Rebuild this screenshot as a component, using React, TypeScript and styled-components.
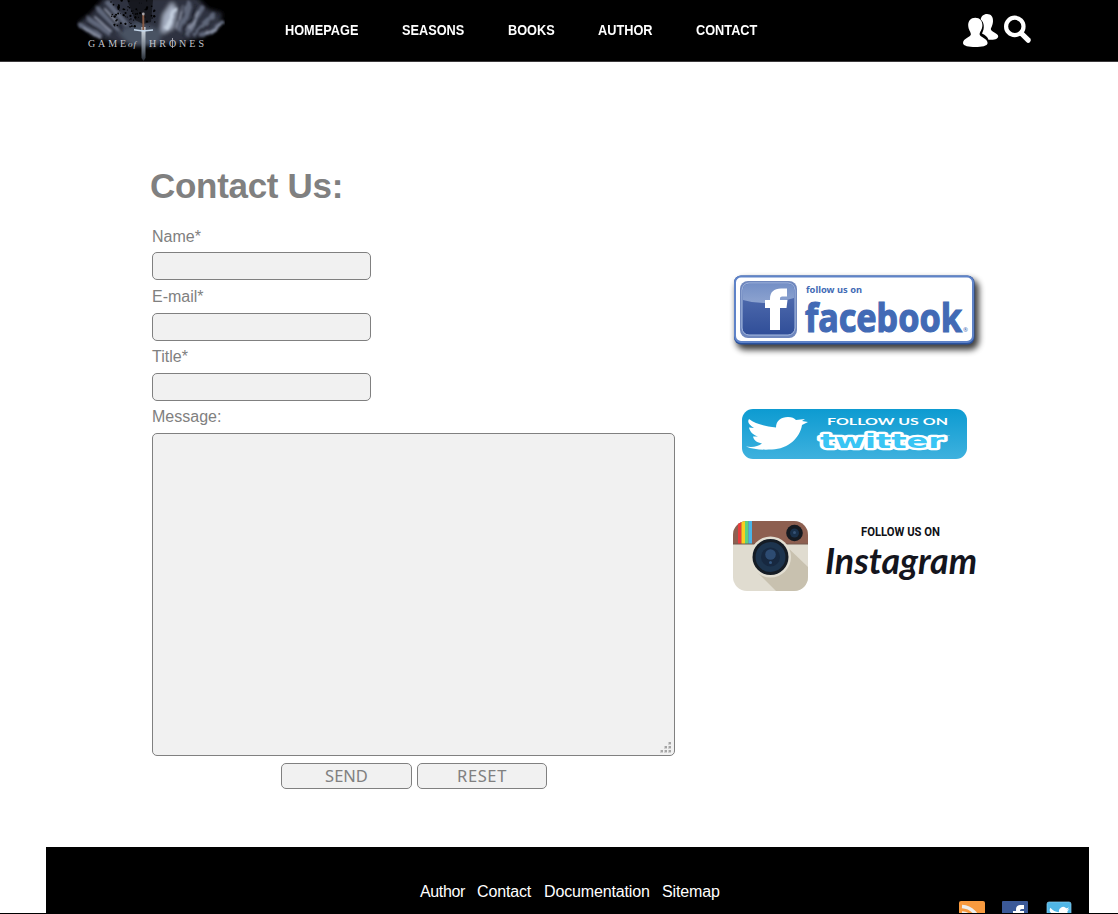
import React from "react";
import styled, { createGlobalStyle } from "styled-components";

const GlobalStyle = createGlobalStyle`
  *, *::before, *::after { box-sizing: border-box; }
  html, body { margin: 0; padding: 0; background: #fff; overflow: hidden; }
  body { font-family: "Liberation Sans", Arial, sans-serif; }
  svg { display: block; }
`;

const Page = styled.div`
  height: 914px;
  overflow: hidden;
  display: flex;
  flex-direction: column;
  border-bottom: 1px solid #000;
`;

const Header = styled.header`
  flex: none;
  display: flex;
  height: 62px;
  padding-left: 75px;
  background: #000;
  border-bottom: 1px solid #3c393c;
`;

const Nav = styled.nav`
  display: flex;
  gap: 44px;
  width: 738px;
  padding: 21px 0 0 60px;
`;

const NavLink = styled.a<{ $width: number }>`
  width: ${(p) => p.$width}px;
  color: #fff;
  font-size: 14px;
  font-weight: bold;
  line-height: 18px;
  white-space: nowrap;
  transform: scaleX(0.91);
  transform-origin: left;
`;

const HeaderIcons = styled.div`
  display: flex;
  gap: 5px;
  padding-top: 13px;
`;

const Main = styled.main`
  flex: none;
  display: flex;
  height: 785px;
  padding-left: 152px;
`;

const Form = styled.form`
  width: 573px;
  padding-top: 103px;
`;

const Title = styled.h1`
  margin: 0 0 21px -2px;
  color: gray;
  font-size: 35px;
  line-height: 42px;
  letter-spacing: -0.3px;
`;

const Field = styled.label<{ $gap?: number; $after?: number }>`
  display: flex;
  flex-direction: column;
  gap: ${(p) => p.$gap ?? 7}px;
  margin-bottom: ${(p) => p.$after ?? 7}px;
  color: gray;
  font-size: 16px;
  line-height: 18px;
`;

const Input = styled.input`
  width: 219px;
  height: 28px;
  padding: 0 6px;
  border: 1px solid gray;
  border-radius: 5px;
  background: #f1f1f1;
  outline: none;
`;

const MessageBox = styled.div`
  position: relative;
  width: 523px;
  height: 323px;
`;

const TextArea = styled.textarea`
  display: block;
  width: 100%;
  height: 100%;
  border: 1px solid gray;
  border-radius: 5px;
  background: #f1f1f1;
  resize: none;
  outline: none;
`;

const Grip = styled.svg`
  position: absolute;
  right: 3px;
  bottom: 2px;
`;

const Actions = styled.div`
  display: flex;
  gap: 5px;
  padding-left: 129px;
`;

const Button = styled.button<{ $width: number; $tracking: number }>`
  width: ${(p) => p.$width}px;
  height: 26px;
  padding: 0 0 1px;
  border: 1px solid gray;
  border-radius: 5px;
  background: #f1f1f1;
  color: gray;
  font: 16.5px/22px "Noto Sans", sans-serif;
  letter-spacing: ${(p) => p.$tracking}px;
`;

const Social = styled.aside`
  padding-top: 203px;
`;

const SocialLink = styled.a<{ $top?: number; $left?: number }>`
  display: block;
  margin-top: ${(p) => p.$top ?? 0}px;
  margin-left: ${(p) => p.$left ?? 0}px;
`;

const Footer = styled.footer`
  flex: none;
  display: flex;
  height: 100px;
  margin: 0 29px 0 46px;
  background: #000;
`;

const FooterLinks = styled.div`
  display: flex;
  gap: 12px;
  width: 913px;
  padding: 36px 0 0 374px;
`;

const FooterLink = styled.a<{ $width: number }>`
  width: ${(p) => p.$width}px;
  color: #fff;
  font-size: 16px;
  line-height: 18px;
  letter-spacing: ${(p) => (p.$width < 50 ? -0.35 : -0.15)}px;
  white-space: nowrap;
`;

const FooterIcons = styled.div`
  display: flex;
  align-items: flex-start;
  gap: 17px;
  padding-top: 54px;
`;

const BIRD =
  "M23.9 4.6a10 10 0 0 1-2.8.8 4.9 4.9 0 0 0 2.1-2.7 9.9 9.9 0 0 1-3.1 1.2 4.9 4.9 0 0 0-8.4 4.5A14 14 0 0 1 1.6 3.2a4.9 4.9 0 0 0 1.5 6.5 4.9 4.9 0 0 1-2.2-.6 4.9 4.9 0 0 0 3.9 4.9 4.9 4.9 0 0 1-2.2.1 4.9 4.9 0 0 0 4.6 3.4A9.9 9.9 0 0 1 0 19.5 14 14 0 0 0 21.5 7a10 10 0 0 0 2.4-2.4z";

const scatter = (seed: number) => {
  const value = Math.sin(seed * 12.9898) * 43758.5453;
  return value - Math.floor(value);
};

const Logo = () => (
  <svg width="150" height="61" viewBox="0 0 150 61">
    <defs>
      <filter id="smoke" x="-10%" y="-10%" width="120%" height="120%">
        <feGaussianBlur stdDeviation="2.2" />
      </filter>
      <filter id="wisps" x="-10%" y="-10%" width="120%" height="120%">
        <feTurbulence type="fractalNoise" baseFrequency=".09" numOctaves="2" seed="4" />
        <feDisplacementMap in="SourceGraphic" scale="6" />
        <feGaussianBlur stdDeviation="1.1" />
      </filter>
      <linearGradient id="blade" x2="0" y2="1">
        <stop stopColor="#dce4ec" />
        <stop offset=".55" stopColor="#7b8490" />
        <stop offset="1" stopColor="#222830" />
      </linearGradient>
    </defs>
    <g filter="url(#smoke)">
      <path d="M3 23L16 13 30 -3H122L133 9 147 13 145 26 128 37 100 44H45L18 36z" fill="#2f3340" />
      <path d="M85 35L88 15 97 2 102 10 98 28z" fill="#a5aec1" />
      <path d="M42 32L62 22 88 31 82 46H56z" fill="#4a5263" />
    </g>
    <g filter="url(#wisps)" fill="none" strokeLinecap="round">
      <path d="M5 25L24 35M14 19L34 33M24 10L43 29M33 3L52 25M106 30L114 4M112 33L127 8M120 34L139 16M128 36L147 23" stroke="#5f6679" strokeWidth="5" />
      <path d="M9 28L25 37M20 17L36 31M30 9L43 23M102 29L108 6M115 28L123 12M131 33L146 26" stroke="#8b92a4" strokeWidth="2" />
      <path d="M12 22L29 35M27 8L47 31M109 35L120 6M119 38L142 15" stroke="#1b1e28" strokeWidth="1.500" />
      <path d="M91 27L100 9" stroke="#c6d1e0" strokeWidth="4" />
    </g>
    <path d="M52 0h26l-2 22-8 2-8-4z" fill="#000" opacity=".5" />
    <g fill="#000">
      {Array.from({ length: 75 }, (_, i) => (
        <circle key={i} cx={36 + scatter(i + 1) * 44} cy={scatter(i + 200) * 27} r={0.4 + scatter(i + 500) * 0.8} />
      ))}
    </g>
    <path d="M66.500 27h4v31l-2 3-2-3z" fill="url(#blade)" />
    <path d="M67.300 15h2v15h-2z" fill="#865b46" />
    <path d="M59 29.800L68 31l10-1" stroke="#c5d7ea" strokeWidth="1.600" fill="none" />
    <circle cx="68.300" cy="14" r="1.400" fill="#aaa6aa" />
    <g fill="#c4c6cc" fontFamily="Liberation Serif, serif" fontSize="10">
      <text x="13" y="46.500" textLength="38">GAME</text>
      <text x="53" y="47" fontSize="9" textLength="8" fontStyle="italic">of</text>
      <text x="74" y="46.500" textLength="55">HRONES</text>
    </g>
    <path d="M97.500 38v10" stroke="#bcbec5" strokeWidth=".8" />
  </svg>
);

const UsersIcon = () => (
  <svg width="36" height="35" viewBox="0 0 36 35">
    <path d="M24 1c-3.500 0-5.800 2.300-6.300 5.500C21.500 9.500 21.700 15.500 19 20.500c3.500 1.700 5.500 3.500 6.500 6.300 4.500.2 9.700-.6 9.700-3.400 0-3.200-5.700-4-7.200-6.700-.7-1.600 1.700-3 2-8.400C30.300 3.800 28 1 24 1z" fill="#fff" />
    <path d="M12.300 4.700c-4.600 0-7.300 3.400-7.100 7.700.2 4.500 2.600 6.300 2.700 8.800C7.800 24 0 25.300 0 30c0 3 6 4 12.300 4s12.300-1 12.300-4c0-4.700-7.900-6-8-8.800.1-2.500 2.600-4.300 2.800-8.800.2-4.300-2.500-7.700-7.100-7.700z" fill="#fff" />
  </svg>
);

const SearchIcon = () => (
  <svg width="28" height="32" viewBox="0 0 28 32" fill="none" stroke="#fff">
    <circle cx="10.800" cy="13.400" r="8.700" strokeWidth="4.200" />
    <path d="M17.500 20.500l6.700 6.700" strokeWidth="5.200" strokeLinecap="round" />
  </svg>
);

const FacebookBanner = () => (
  <svg width="265" height="95" viewBox="0 0 265 95">
    <defs>
      <linearGradient id="fbTile" x2="0" y2="1">
        <stop stopColor="#5873b4" />
        <stop offset="1" stopColor="#304e98" />
      </linearGradient>
      <linearGradient id="fbGloss" x2="0" y2="1">
        <stop stopColor="#7590c6" />
        <stop offset="1" stopColor="#8da3d0" />
      </linearGradient>
      <filter id="drop"><feGaussianBlur stdDeviation="3" /></filter>
    </defs>
    <rect x="11" y="14" width="243" height="71" rx="9" fill="#000" opacity=".75" filter="url(#drop)" />
    <rect x="9" y="10.500" width="240.500" height="69" rx="7" fill="#29519d" />
    <rect x="10" y="11.500" width="238" height="65.500" rx="6" fill="#fff" stroke="#5f83c8" strokeWidth="2" />
    <rect x="15" y="16" width="57" height="57" rx="8" fill="#6f87bd" />
    <rect x="17" y="18" width="53" height="52" rx="7" fill="url(#fbTile)" stroke="#a9bde2" />
    <path d="M18 35V24q0-5 6-5h39q6 0 6 5v9Q40 42 18 35z" fill="url(#fbGloss)" />
    <path d="M45 65V43h-5v-8h5v-1c0-7 4-10.500 11-10.500h6v8h-4c-3 0-3 1-3 3.500h7.500l-1 8H55v22z" fill="#fff" />
    <g fill="#426ab5" fontFamily="Noto Sans, sans-serif" fontWeight="bold">
      <text x="81" y="28" fontSize="9.500" textLength="56" lengthAdjust="spacingAndGlyphs">follow us on</text>
      <text x="80" y="67" fontSize="39" textLength="157" lengthAdjust="spacingAndGlyphs" stroke="#426ab5" strokeWidth="1.200">facebook</text>
      <text x="238" y="67" fontSize="6" fontWeight="normal">®</text>
    </g>
  </svg>
);

const TwitterBanner = () => (
  <svg width="240" height="66" viewBox="0 0 240 66">
    <defs>
      <linearGradient id="twBg" x2="0" y2="1">
        <stop stopColor="#0d9bd1" />
        <stop offset="1" stopColor="#3eb1de" />
      </linearGradient>
    </defs>
    <rect x="7" y="9" width="225" height="50" rx="11" fill="url(#twBg)" />
    <path d="M11 46.500c7 1 12 0 16-3-5-1-8-3-9-7h5c-6-2-8-5-9-9l5 .5c-5-3-7-6-5-9 7 5 15 7 27 8.500C41 21 46 17 53 17c4 0 6 1 8 3l9-1-3 2 6 1-6 3c-2 13-14 24-30 24.500-10 .5-19 0-26-3z" fill="#fff" />
    <text x="92" y="24.500" fill="#fff" fontFamily="Lato, sans-serif" fontWeight="bold" fontSize="9.500" textLength="121" lengthAdjust="spacingAndGlyphs">FOLLOW US ON</text>
    <text x="85" y="48" fontFamily="DejaVu Sans, sans-serif" fontWeight="bold" fontSize="20" textLength="124" lengthAdjust="spacingAndGlyphs" fill="#39c5f4" stroke="#fff" strokeWidth="4.500" strokeLinejoin="round" paintOrder="stroke">twitter</text>
    <text x="211" y="36" fill="#d8f2fb" fontSize="2.500">TM</text>
  </svg>
);

const InstagramBanner = () => (
  <svg width="260" height="88" viewBox="0 0 260 88">
    <defs>
      <clipPath id="igTile"><rect x="8" y="9" width="75" height="70" rx="14" /></clipPath>
    </defs>
    <g clipPath="url(#igTile)">
      <path d="M8 9h75v70H8z" fill="#e0dcd0" />
      <path d="M58 31L84 56v24H52L31 59z" fill="#c8c1af" />
      <path d="M8 9h75v23H8z" fill="#8d5f50" />
      <path d="M13 9h3.500v23H13z" fill="#e83c3b" />
      <path d="M16.500 9H20v23h-3.500z" fill="#f9cf20" />
      <path d="M20 9h3.500v23H20z" fill="#5ed37b" />
      <path d="M23.500 9H27v23h-3.500z" fill="#49b4e8" />
      <path d="M8 32h75" stroke="#73584d" />
    </g>
    <circle cx="45.500" cy="45" r="20.500" fill="#e2ded2" />
    <circle cx="45.500" cy="45" r="18" fill="#151c25" />
    <circle cx="45.500" cy="45" r="15" fill="#1d344e" />
    <circle cx="45.500" cy="45" r="9.500" fill="#172840" />
    <circle cx="45.500" cy="42.500" r="5.300" fill="#2d4b72" />
    <circle cx="45.500" cy="50.500" r="1.500" fill="#345781" />
    <circle cx="69.500" cy="21" r="8.300" fill="#151a21" />
    <circle cx="69.500" cy="21" r="4.500" fill="#1a314b" />
    <circle cx="69.500" cy="20.500" r="1.500" fill="#365375" />
    <text x="136" y="24" fill="#101116" fontFamily="Roboto, sans-serif" fontWeight="bold" fontSize="12" textLength="79" lengthAdjust="spacingAndGlyphs">FOLLOW US ON</text>
    <text x="100" y="62" fill="#14151d" fontFamily="Lato, sans-serif" fontWeight="bold" fontStyle="italic" fontSize="37" textLength="152" lengthAdjust="spacingAndGlyphs">Instagram</text>
  </svg>
);

const ResizeGrip = () => (
  <Grip width="12" height="12" viewBox="0 0 12 12">
    {[[8, 0], [4, 4], [8, 4], [0, 8], [4, 8], [8, 8]].map(([x, y]) => (
      <g key={`${x}-${y}`}>
        <rect x={x} y={y} width="3" height="3" fill="#d0d0d0" />
        <rect x={x + 1} y={y} width="2" height="2" fill="#a5a5a5" />
      </g>
    ))}
  </Grip>
);

const RssBadge = () => (
  <svg width="26" height="26" viewBox="0 0 26 26">
    <rect width="26" height="26" rx="2" fill="#f89a3f" />
    <path d="M3 5.500A18 18 0 0 1 20 23M3 12a11 11 0 0 1 11 11" fill="none" stroke="#eee" strokeWidth="3.500" />
    <circle cx="5" cy="20" r="2.500" fill="#eee" />
  </svg>
);

const FacebookBadge = () => (
  <svg width="26" height="26" viewBox="0 0 26 26">
    <rect width="26" height="26" rx="1" fill="#3b5998" />
    <path d="M14 26V14h-3v-4h3V9c0-4 2-5 5-5h3v4h-2c-2 0-2 1-2 2h4v4h-4v12z" fill="#fff" />
  </svg>
);

const TwitterBadge = () => (
  <svg width="28" height="26" viewBox="0 0 28 26">
    <rect x="2" y="1" width="24" height="24" rx="2" fill="#50b6e6" stroke="#8bcff0" strokeWidth=".7" />
    <path d={BIRD} transform="translate(4 4) scale(.86)" fill="#fff" />
  </svg>
);

const navItems: [string, number][] = [
  ["HOMEPAGE", 73],
  ["SEASONS", 62],
  ["BOOKS", 46],
  ["AUTHOR", 54],
  ["CONTACT", 62],
];

const footerItems: [string, number][] = [
  ["Author", 45],
  ["Contact", 55],
  ["Documentation", 106],
  ["Sitemap", 60],
];

export default function App() {
  return (
    <>
      <GlobalStyle />
      <Page>
        <Header>
          <Logo />
          <Nav>
            {navItems.map(([text, width]) => (
              <NavLink key={text} $width={width}>{text}</NavLink>
            ))}
          </Nav>
          <HeaderIcons>
            <UsersIcon />
            <SearchIcon />
          </HeaderIcons>
        </Header>
        <Main>
          <Form>
            <Title>Contact Us:</Title>
            <Field $gap={6} $after={8}>
              <span>Name*</span>
              <Input />
            </Field>
            <Field>
              <span>E-mail*</span>
              <Input />
            </Field>
            <Field>
              <span>Title*</span>
              <Input />
            </Field>
            <Field>
              <span>Message:</span>
              <MessageBox>
                <TextArea />
                <ResizeGrip />
              </MessageBox>
            </Field>
            <Actions>
              <Button type="button" $width={131} $tracking={0}>SEND</Button>
              <Button type="reset" $width={130} $tracking={0.6}>RESET</Button>
            </Actions>
          </Form>
          <Social>
            <SocialLink><FacebookBanner /></SocialLink>
            <SocialLink $top={40} $left={10}><TwitterBanner /></SocialLink>
            <SocialLink $top={46}><InstagramBanner /></SocialLink>
          </Social>
        </Main>
        <Footer>
          <FooterLinks>
            {footerItems.map(([text, width]) => (
              <FooterLink key={text} $width={width}>{text}</FooterLink>
            ))}
          </FooterLinks>
          <FooterIcons>
            <RssBadge />
            <FacebookBadge />
            <TwitterBadge />
          </FooterIcons>
        </Footer>
      </Page>
    </>
  );
}
